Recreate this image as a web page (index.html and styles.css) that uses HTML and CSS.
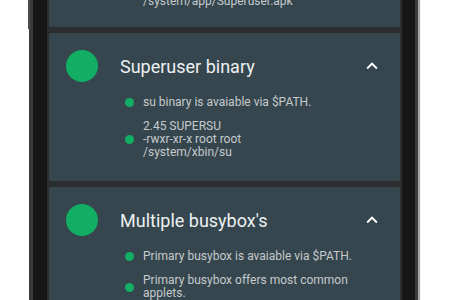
FILE: index.html
```html
<!DOCTYPE html>
<html lang="en">
<head>
  <meta charset="UTF-8" />
  <meta name="viewport" content="width=device-width, initial-scale=1.0" />
  <title>Root Checker</title>
  <link rel="stylesheet" href="styles.css">
</head>
<body>

  <div class="phone">
    <span class="side-button"></span>

    <div class="screen">
      <main class="check-list">

        <!-- Superuser app (scrolled mostly out of view) -->
        <section class="check-card check-card-first">
          <div class="check-head">
            <span class="status-dot"></span>
            <h2>Superuser application</h2>
            <svg class="toggle" viewBox="0 0 24 24"><path d="M7.41 15.41L12 10.83l4.59 4.58L18 14l-6-6-6 6z"/></svg>
          </div>
          <ul class="check-items">
            <li>Superuser app is installed.</li>
            <li>eu.chainfire.supersu<br>2.45<br>/system/app/Superuser.apk</li>
          </ul>
        </section>

        <!-- Superuser binary -->
        <section class="check-card">
          <div class="check-head">
            <span class="status-dot"></span>
            <h2>Superuser binary</h2>
            <svg class="toggle" viewBox="0 0 24 24"><path d="M7.41 15.41L12 10.83l4.59 4.58L18 14l-6-6-6 6z"/></svg>
          </div>
          <ul class="check-items">
            <li>su binary is avaiable via $PATH.</li>
            <li>2.45 SUPERSU<br>-rwxr-xr-x root root<br>/system/xbin/su</li>
          </ul>
        </section>

        <!-- Busybox -->
        <section class="check-card">
          <div class="check-head">
            <span class="status-dot"></span>
            <h2>Multiple busybox's</h2>
            <svg class="toggle" viewBox="0 0 24 24"><path d="M7.41 15.41L12 10.83l4.59 4.58L18 14l-6-6-6 6z"/></svg>
          </div>
          <ul class="check-items">
            <li>Primary busybox is avaiable via $PATH.</li>
            <li>Primary busybox offers most common<br>applets.</li>
          </ul>
        </section>

      </main>
    </div>
  </div>

</body>
</html>
```

FILE: styles.css
```css
body {
  margin: 0;
  background: #fff;
  font-family: Roboto, "Noto Sans", sans-serif;
  overflow: hidden;
}

/* phone frame */
.phone {
  position: relative;
  display: flex;
  margin-left: 29px;
  width: 355px;
  height: 300px;
  padding: 0 13px 0 14px;
  background: #161616;
  border-left: 4px solid #3a3a3a;
  border-right: 3px solid #3b3b3b;
  box-shadow: 2px 0 1px #a5a5a5;
}

.side-button {
  position: absolute;
  left: -5px;
  top: 0;
  width: 2px;
  height: 29px;
  background: #4a4a4a;
}

.screen {
  flex: 1;
  background: #2b2d2e;
  padding: 0 2px;
  overflow: hidden;
}

.check-list {
  display: flex;
  flex-direction: column;
  gap: 6px;
  margin-top: -118px;
}

/* cards */
.check-card {
  background: #36464e;
  border-radius: 2px;
  padding: 17px 17px 22px;
}

.check-card-first {
  padding-bottom: 19px;
}

.check-head {
  display: flex;
  align-items: center;
  height: 32px;
}

.status-dot {
  width: 32px;
  height: 32px;
  border-radius: 50%;
  background: #12ae64;
  flex-shrink: 0;
}

.check-head h2 {
  flex: 1;
  margin: 0 0 0 22px;
  font-size: 18px;
  font-weight: 400;
  color: #eef1f2;
}

.toggle {
  width: 22px;
  height: 22px;
  fill: #fff;
  margin-right: 0.5px;
}

.check-items {
  list-style: none;
  margin: 14px 0 0 59px;
  padding: 0;
  display: flex;
  flex-direction: column;
  gap: 11px;
}

.check-items li {
  display: flex;
  align-items: center;
  font-size: 12px;
  line-height: 13px;
  color: #c5cacd;
}

.check-items li::before {
  content: "";
  width: 9px;
  height: 9px;
  margin-right: 9px;
  border-radius: 50%;
  background: #12ae64;
  flex-shrink: 0;
}
```
